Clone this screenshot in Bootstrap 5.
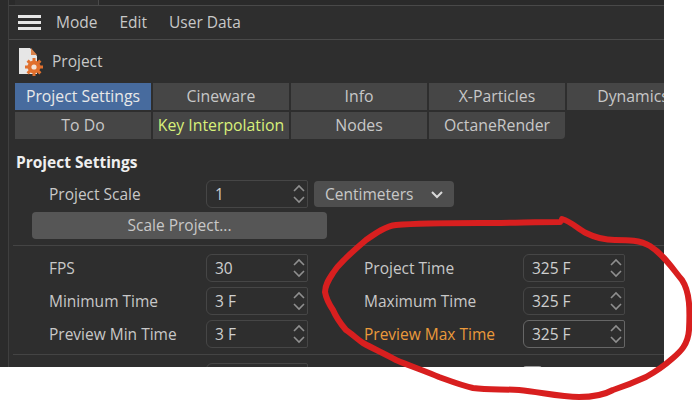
<!DOCTYPE html>
<html lang="en">
<head>
<meta charset="utf-8">
<title>Project</title>
<link rel="stylesheet" href="https://cdn.jsdelivr.net/npm/bootstrap@5.3.0/dist/css/bootstrap.min.css">
<style>
html,body{background:#fff;margin:0;height:400px;overflow:hidden}
body{font-family:"Open Sans","Noto Sans",sans-serif;font-size:15.5px;color:#c8c8c8;position:relative}
.panel-c4d{width:664px;height:367px;background:#2e2e2e;overflow:hidden;display:flex}
.gutter{width:9px;flex:none;background:#2b2b2b;border-right:1px solid #3f3f3f}
.main-c4d{flex:1;min-width:0;display:flex;flex-direction:column}
.top-strip{height:6px;flex:none;background:#2a2a2a;border-bottom:1px solid #494949;padding-left:6px}
.top-tab{display:block;width:84px;height:5px;background:#303030;border-right:1px solid #494949}
.menu-c4d{height:34px;flex:none;border-bottom:1px solid #4a4a4a;padding-left:9px;gap:22px}
.menu-c4d span{line-height:1}
.burger{width:23px;height:15px;margin-right:-7px;display:flex;flex-direction:column;justify-content:space-between}
.burger i{display:block;height:3px;background:#e6e6e6}
.proj-title{height:43px;flex:none;padding-left:10px;gap:8px}
.tabs-c4d{display:grid;grid-template-columns:repeat(4,136px) 132px;gap:2px;padding-left:6px;width:730px;grid-auto-rows:27px;font-size:15.8px}
.tab-c4d{background:#464646;color:#c8c8c8;border:0;padding:1px 0 0;border-radius:0;font:inherit;white-space:nowrap;line-height:1}
.tab-on{background:#476b9e;color:#e8e8e8}
.tab-key{color:#d8f07a}
.tab-end{border-bottom-right-radius:4px}
.sect-title{font-weight:700;color:#efefef;font-size:15.5px;padding:13px 0 0 7px;height:41px;flex:none;line-height:20px;margin:0}
.row-c4d{display:flex;align-items:center;height:28px;flex:none}
.lbl{width:197px;padding:1px 0 0 40px;white-space:nowrap;flex:none}
.lbl-r{width:159px;padding-top:1px;flex:none;white-space:nowrap}
.col-left{width:355px;flex:none;display:flex;align-items:center}
.spin{width:102px;height:28px;flex:none;border:1px solid #464646;border-radius:6px 2px 2px 6px;padding:1px 0 0 8px;display:flex;align-items:center;justify-content:space-between;color:#cfcfcf}
.spin-hot{border-color:#666}
.spin svg{margin:-1px 1px 0 0}
.sel-c4d{width:140px;height:26px;margin-left:6px;background:#4e4e4e;border-radius:4px;padding:1px 11px 0;color:#c8c8c8;display:flex;align-items:center;justify-content:space-between;line-height:1}
.scale-btn{width:295px;height:27px;margin:4px 0 6px 23px;background:#565656;color:#c8c8c8;border:0;border-radius:4px;padding:1px 0 0;font:inherit;line-height:1;flex:none;display:block}
.rule-c4d{height:1px;background:#444;flex:none;margin-left:4px}
.rows-box{display:flex;flex-direction:column;gap:5px;padding-top:8px;height:108px;flex:none}
.row-peek{margin-top:8px;align-items:flex-start}
.chk-c4d{width:19px;height:20px;background:#9a9a9a;border-radius:3px;margin-top:3px}
.hot-lbl{color:#eb9a3b}
.ink{position:absolute;left:0;top:0;pointer-events:none}
</style>
</head>
<body>
<div class="panel-c4d">
  <div class="gutter"></div>
  <div class="main-c4d">
    <div class="top-strip"><span class="top-tab"></span></div>
    <div class="menu-c4d d-flex align-items-center">
      <div class="burger"><i></i><i></i><i></i></div>
      <span>Mode</span><span>Edit</span><span>User Data</span>
    </div>
    <div class="proj-title d-flex align-items-center">
      <svg width="25" height="29" viewBox="0 0 25 29"><path d="M0 1h11l7 8v18H0z" fill="#e6e6e6"/><path d="M12 1l6 7h-6z" fill="#d9824a"/><g transform="translate(15 20)"><circle r="6.5" fill="#e0702e"/><g stroke="#e0702e" stroke-width="3"><path d="M0-9V9M-9 0H9M-6.4-6.4 6.4 6.4M-6.4 6.4 6.4-6.4"/></g><circle r="2.6" fill="#f3e4d8"/></g></svg>
      <span>Project</span>
    </div>
    <div class="tabs-c4d">
      <button class="tab-c4d tab-on">Project Settings</button>
      <button class="tab-c4d">Cineware</button>
      <button class="tab-c4d">Info</button>
      <button class="tab-c4d">X-Particles</button>
      <button class="tab-c4d">Dynamics</button>
      <button class="tab-c4d">To Do</button>
      <button class="tab-c4d tab-key">Key Interpolation</button>
      <button class="tab-c4d">Nodes</button>
      <button class="tab-c4d tab-end">OctaneRender</button>
    </div>
    <h6 class="sect-title">Project Settings</h6>
    <div class="row-c4d">
      <div class="lbl">Project Scale</div>
      <div class="spin"><span>1</span><svg width="14" height="20" viewBox="0 0 14 20" fill="none" stroke="#8f8f8f" stroke-width="1.6"><path d="M2 7l5-5 5 5M2 13l5 5 5-5"/></svg></div>
      <div class="sel-c4d"><span>Centimeters</span><svg width="12" height="8" viewBox="0 0 12 8" fill="none" stroke="#d8d8d8" stroke-width="2"><path d="M1 1l5 5 5-5"/></svg></div>
    </div>
    <button class="scale-btn">Scale Project...</button>
    <div class="rule-c4d"></div>
    <div class="rows-box">
      <div class="row-c4d"><div class="col-left"><div class="lbl">FPS</div><div class="spin"><span>30</span><svg width="14" height="20" viewBox="0 0 14 20" fill="none" stroke="#8f8f8f" stroke-width="1.6"><path d="M2 7l5-5 5 5M2 13l5 5 5-5"/></svg></div></div><div class="lbl-r">Project Time</div><div class="spin"><span>325 F</span><svg width="14" height="20" viewBox="0 0 14 20" fill="none" stroke="#8f8f8f" stroke-width="1.6"><path d="M2 7l5-5 5 5M2 13l5 5 5-5"/></svg></div></div>
      <div class="row-c4d"><div class="col-left"><div class="lbl">Minimum Time</div><div class="spin"><span>3 F</span><svg width="14" height="20" viewBox="0 0 14 20" fill="none" stroke="#8f8f8f" stroke-width="1.6"><path d="M2 7l5-5 5 5M2 13l5 5 5-5"/></svg></div></div><div class="lbl-r">Maximum Time</div><div class="spin"><span>325 F</span><svg width="14" height="20" viewBox="0 0 14 20" fill="none" stroke="#8f8f8f" stroke-width="1.6"><path d="M2 7l5-5 5 5M2 13l5 5 5-5"/></svg></div></div>
      <div class="row-c4d"><div class="col-left"><div class="lbl">Preview Min Time</div><div class="spin"><span>3 F</span><svg width="14" height="20" viewBox="0 0 14 20" fill="none" stroke="#8f8f8f" stroke-width="1.6"><path d="M2 7l5-5 5 5M2 13l5 5 5-5"/></svg></div></div><div class="lbl-r hot-lbl">Preview Max Time</div><div class="spin spin-hot"><span>325 F</span><svg width="14" height="20" viewBox="0 0 14 20" fill="none" stroke="#8f8f8f" stroke-width="1.6"><path d="M2 7l5-5 5 5M2 13l5 5 5-5"/></svg></div></div>
    </div>
    <div class="rule-c4d"></div>
    <div class="row-c4d row-peek"><div class="col-left"><div class="lbl"></div><div class="spin"></div></div><div class="lbl-r"></div><div class="chk-c4d"></div></div>
  </div>
</div>
<svg class="ink" width="692" height="400" viewBox="0 0 692 400" fill="none" stroke="#d81f1f" stroke-width="6" stroke-linecap="round" stroke-linejoin="round"><path d="M562 219C572 222 578 229 586 233C596 238 606 240 615 240C628 240 640 240 650 246C664 255 672 268 682 280C690 292 690 310 689 330C688 345 680 352 673 358C664 366 655 372 646 377C635 382 625 386 613 390C602 396 590 397 579 397C560 397 540 392 519 390C500 389 488 390 473 388C460 385 450 381 439 377C425 371 410 366 396 360C385 354 374 349 363 343C357 339 352 334 346 330C340 323 336 317 333 310C329 304 326 298 325 292C325 285 329 279 333 273C338 265 342 262 346 258C352 252 359 246 366 240C376 233 386 226 396 225C420 223 450 223 480 223C510 223 535 222 560 222"/></svg>
</body>
</html>
